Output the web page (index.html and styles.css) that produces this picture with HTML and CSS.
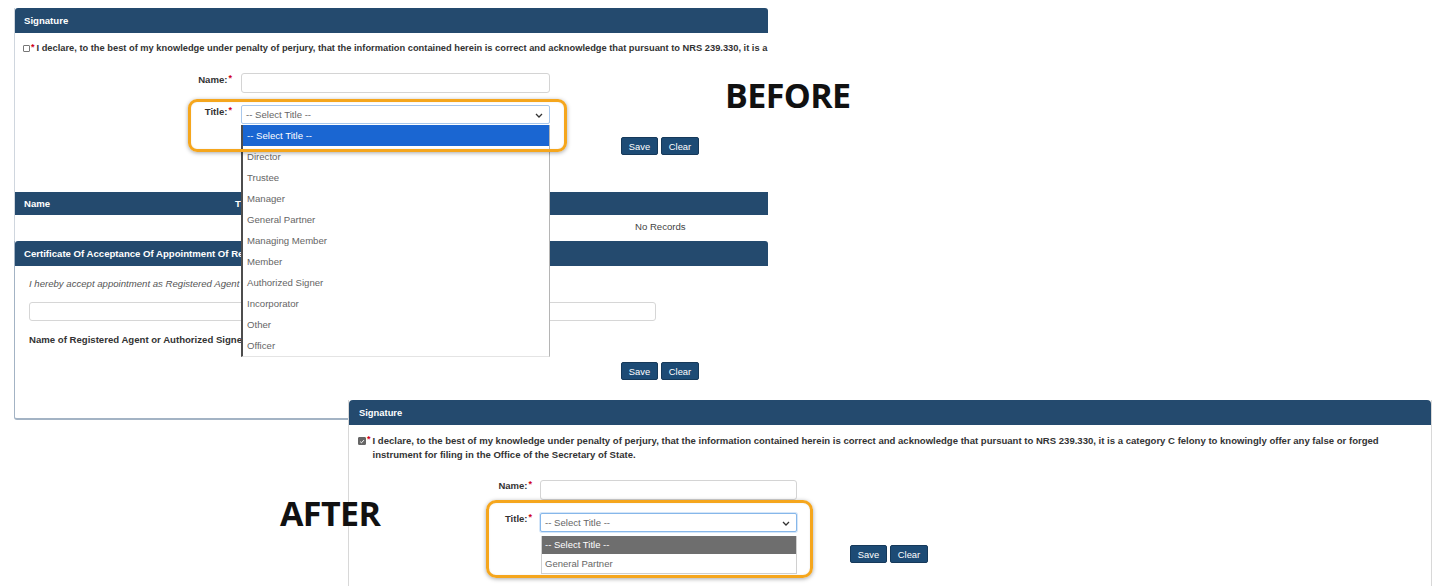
FILE: index.html
```html
<!DOCTYPE html>
<html lang="en">
<head>
<meta charset="utf-8">
<title>Signature title dropdown - before and after</title>
<link rel="stylesheet" href="styles.css">
</head>
<body>
<div class="canvas">

  <!-- BEFORE screenshot -->
  <div class="shot shot-before">
    <div class="sig-wrap">
      <div class="bar">Signature</div>
      <div class="declare">
        <span class="cb"></span><span class="req">*</span><span class="declare-text">I declare, to the best of my knowledge under penalty of perjury, that the information contained herein is correct and acknowledge that pursuant to NRS 239.330, it is a category C felony to knowingly offer any false or forged instrument for filing in the Office of the Secretary of State.</span>
      </div>
      <div class="frow frow-name">
        <label class="flabel">Name:<span class="req">*</span></label>
        <div class="finput"></div>
      </div>
      <div class="frow frow-title">
        <label class="flabel">Title:<span class="req">*</span></label>
        <div class="fselect">
          <span class="placeholder">-- Select Title --</span>
          <svg class="chev" viewBox="0 0 8 5" width="8" height="5"><path d="M1 1 L4 4 L7 1" fill="none" stroke="#333" stroke-width="1.3"/></svg>
          <ul class="dd dd-before">
            <li class="sel">-- Select Title --</li>
            <li>Director</li>
            <li>Trustee</li>
            <li>Manager</li>
            <li>General Partner</li>
            <li>Managing Member</li>
            <li>Member</li>
            <li>Authorized Signer</li>
            <li>Incorporator</li>
            <li>Other</li>
            <li>Officer</li>
          </ul>
        </div>
      </div>
      <div class="btns btns-1"><button class="btn">Save</button><button class="btn">Clear</button></div>
      <div class="thead"><span class="th-name">Name</span><span class="th-title">Title</span></div>
      <div class="trow">No Records</div>
    </div>
    <div class="cert">
      <div class="bar">Certificate Of Acceptance Of Appointment Of Registered Agent</div>
      <div class="cert-body">
        <p class="cert-note">I hereby accept appointment as Registered Agent for the above named business entity.</p>
        <div class="cert-input"></div>
        <p class="cert-label">Name of Registered Agent or Authorized Signer</p>
        <div class="btns btns-2"><button class="btn">Save</button><button class="btn">Clear</button></div>
      </div>
    </div>
    <div class="hl hl-before"></div>
  </div>
  <div class="tag tag-before">BEFORE</div>

  <!-- AFTER screenshot -->
  <div class="shot shot-after">
    <div class="a-panel">
      <div class="bar a-bar">Signature</div>
      <div class="declare a-declare">
        <span class="cb cb-on"><svg viewBox="0 0 8 8" width="8" height="8"><path d="M1.6 4.2 L3.3 5.8 L6.5 2.2" fill="none" stroke="#fff" stroke-width="1.3"/></svg></span><span class="req">*</span><span class="declare-text">I declare, to the best of my knowledge under penalty of perjury, that the information contained herein is correct and acknowledge that pursuant to NRS 239.330, it is a category C felony to knowingly offer any false or forged<br>instrument for filing in the Office of the Secretary of State.</span>
      </div>
      <div class="frow a-frow-name">
        <label class="flabel a-flabel">Name:<span class="req">*</span></label>
        <div class="finput a-finput"></div>
      </div>
      <div class="frow a-frow-title">
        <label class="flabel a-flabel">Title:<span class="req">*</span></label>
        <div class="fselect a-fselect">
          <span class="placeholder">-- Select Title --</span>
          <svg class="chev" viewBox="0 0 8 5" width="8" height="5"><path d="M1 1 L4 4 L7 1" fill="none" stroke="#333" stroke-width="1.3"/></svg>
          <ul class="dd dd-after">
            <li class="sel">-- Select Title --</li>
            <li>General Partner</li>
          </ul>
        </div>
      </div>
      <div class="btns a-btns"><button class="btn">Save</button><button class="btn">Clear</button></div>
    </div>
    <div class="hl hl-after"></div>
  </div>
  <div class="tag tag-after">AFTER</div>

</div>
</body>
</html>
```
FILE: styles.css
```css
* { box-sizing: border-box; }
html, body { margin: 0; padding: 0; background: #fff; }
body { font-family: "Liberation Sans", Arial, sans-serif; color: #333; }

.canvas { position: relative; width: 1441px; height: 586px; overflow: hidden; background: #fff; }

.shot { position: absolute; overflow: hidden; background: #fff; }
.shot-before { left: 14px; top: 8px; width: 754px; height: 412px; }
.shot-after { left: 348px; top: 400px; width: 1084px; height: 186px; }

.bar {
  height: 25px; line-height: 25px; padding-left: 9px;
  background: #244a6e; color: #fff; font-weight: bold; font-size: 9.6px;
  border-radius: 3px 3px 0 0; white-space: nowrap; overflow: hidden;
}

.sig-wrap { border-left: 1px solid #cfd6de; }

.declare { display: flex; align-items: center; padding: 9px 0 0 8px; height: 21px; white-space: nowrap; }
.declare-text { font-weight: bold; font-size: 9.3px; color: #333; line-height: 14px; }
.req { color: #d0021b; font-weight: bold; font-size: 9px; margin: 0 2px 0 1px; position: relative; top: -1px; }

.cb { width: 7px; height: 7px; border: 1px solid #777; border-radius: 1px; flex: none; display: inline-block; background: #fff; }
.cb-on { background: #666; border-color: #666; display: flex; align-items: center; justify-content: center; width: 8px; height: 8px; }
.cb-on svg { width: 7px; height: 7px; }

.frow { display: flex; align-items: flex-start; }
.flabel { width: 217px; text-align: right; font-weight: bold; font-size: 9.6px; line-height: 12px; padding-top: 1px; color: #333; flex: none; }
.flabel .req { margin: 0 0 0 1px; top: -2px; }
.frow-name { margin-top: 19px; }
.frow-title { margin-top: 12px; }
.finput { margin-left: 9px; width: 309px; height: 20px; border: 1px solid #d4d4d4; border-radius: 3px; background: #fff; }

.fselect {
  position: relative; margin-left: 9px; width: 309px; height: 19px;
  border: 1px solid #a9c8ec; border-radius: 2px; background: #fff;
  display: flex; align-items: center; padding-left: 4px;
}
.placeholder { font-size: 9.6px; color: #666; }
.chev { position: absolute; right: 6px; top: 7px; }

.dd { position: absolute; list-style: none; margin: 0; padding: 0; background: #fff; z-index: 2; }
.dd li { font-size: 9.6px; color: #666; padding-left: 4px; white-space: nowrap; }
.dd-before { left: -1px; top: 19px; width: 309px; height: 232px; border-left: 2px solid #4d4d4d; border-right: 1px solid #b5b5b5; border-bottom: 1px solid #e4e4e4; }
.dd-before li { height: 21px; line-height: 21px; }
.dd-before li.sel { background: #1a66d2; color: #fff; }

.btns { display: flex; gap: 3px; }
.btn {
  font-family: "Liberation Sans", Arial, sans-serif; font-size: 9.4px; color: #fff;
  background: #1d4b75; border: 1px solid #16395a; border-radius: 2px;
  height: 18px; padding: 0; margin: 0; cursor: pointer;
}
.btn:first-child { width: 37px; }
.btn:last-child { width: 38px; }
.btns-1 { margin: 13px 0 0 606px; }

.thead { margin-top: 37px; height: 23px; line-height: 23px; background: #244a6e; color: #fff; font-weight: bold; font-size: 9.6px; display: flex; }
.th-name { padding-left: 9px; width: 220px; }
.trow { height: 26px; line-height: 24px; padding-left: 620px; font-size: 9.6px; color: #444; }

.cert { border-left: 1px solid #a3b3c4; border-bottom: 2px solid #a3b3c4; border-radius: 0 0 0 3px; height: 179px; }
.cert-body { padding: 11px 0 0 14px; }
.cert-note { margin: 0; font-style: italic; font-size: 9.6px; line-height: 14px; color: #555; white-space: nowrap; }
.cert-input { margin-top: 11px; width: 627px; height: 19px; border: 1px solid #d6d6d6; border-radius: 3px; }
.cert-label { margin: 12px 0 0; font-weight: bold; font-size: 9.6px; line-height: 14px; color: #333; white-space: nowrap; }
.btns-2 { margin: 15px 0 0 592px; }

.hl { position: absolute; border: 3px solid #f5a61d; border-radius: 9px; box-shadow: 0 1px 4px rgba(0,0,0,.35), inset 0 0 2px rgba(0,0,0,.1); z-index: 5; pointer-events: none; }
.hl-before { left: 174px; top: 91px; width: 379px; height: 53px; }
.hl-after { left: 138px; top: 100px; width: 327px; height: 78px; border-radius: 10px; }

/* AFTER */
.a-panel { border-left: 1px solid #d8d8d8; border-right: 1px solid #d8d8d8; height: 186px; }
.a-bar { font-size: 9.4px; padding-left: 10px; border-radius: 4px 4px 0 0; }
.a-declare { padding: 9px 0 0 9px; height: auto; align-items: flex-start; white-space: normal; }
.a-declare .cb { margin-top: 3px; }
.a-declare .declare-text { font-size: 9.55px; white-space: nowrap; }
.a-declare .req { top: 0; }
.a-frow-name { margin-top: 18px; }
.a-frow-title { margin-top: 13px; }
.a-flabel { width: 183px; font-size: 9.5px; padding-top: 0; }
.a-finput { margin-left: 8px; width: 257px; }
.a-fselect { margin-left: 8px; width: 257px; border-color: #86b7ea; box-shadow: 0 0 0 1px rgba(134,183,234,.35); }
.dd-after { left: 0; top: 22px; width: 256px; border: 1px solid #d0d0d0; border-top: none; }
.dd-after li { height: 18px; line-height: 18px; font-size: 9.5px; padding-left: 3px; }
.dd-after li.sel { background: #6e6e6e; color: #fff; height: 18px; }
.dd-after li + li { height: 19px; line-height: 19px; }
.a-btns { margin: 13px 0 0 501px; }

.tag { position: absolute; font-family: "Open Sans", "DejaVu Sans", sans-serif; font-weight: 700; font-size: 34px; line-height: 1; color: #111; letter-spacing: -0.6px; }
.tag-before { left: 725px; top: 78px; }
.tag-after { left: 280px; top: 496px; }
```
